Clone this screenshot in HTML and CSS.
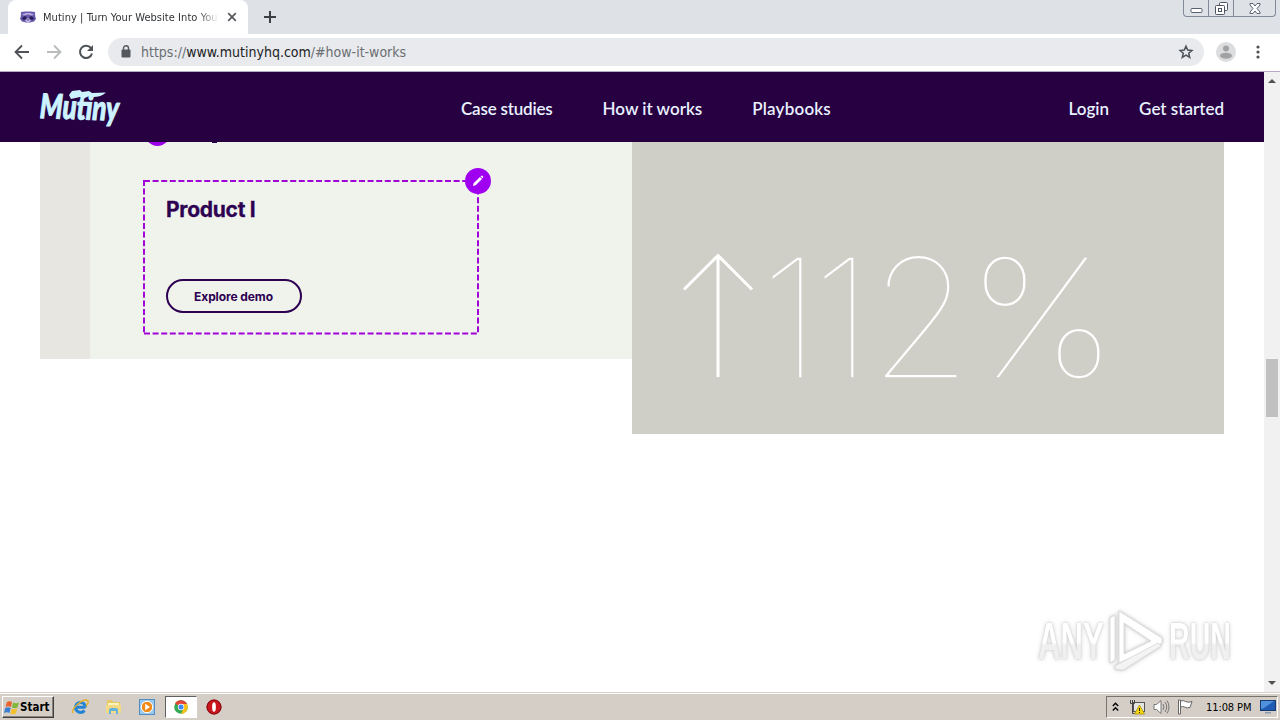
FILE: index.html
```html
<!DOCTYPE html>
<html lang="en">
<head>
    <meta charset="UTF-8">
    <meta name="viewport" content="width=device-width, initial-scale=1.0">
    <title>Mutiny | Turn Your Website Into Your #1 Channel</title>
    <link rel="stylesheet" href="styles.css">
</head>
<body>
    <!-- Browser tabs -->
    <div class="tabstrip">
        <div class="tab">
            <svg class="favicon" width="16" height="14" viewBox="0 0 16 14">
                <path d="M1 2l4-.5h6l4 .5 .2 4 .8 3-2 2.500-4 1H6l-4-1L0 9l.8-3z" fill="#6a5aae"/>
                <path d="M2 4.500l4-1.500h4l4 1.500-2 1-4-1-4 1z" fill="#b9addf"/>
                <path d="M2 8l2.500-2 2.500 1L5.500 9.500 3 10zM14 8l-2.500-2L9 7l1.500 2.500 2.500.5z" fill="#2c2059"/>
                <path d="M5 11L8 8l3 3-3 1.500z" fill="#c9bfea"/>
                <path d="M7 9.500h2L8 11z" fill="#22184e"/>
            </svg>
            <span class="tab-title">Mutiny | Turn Your Website Into You</span>
            <svg class="tab-close" width="10" height="10" viewBox="0 0 10 10"><path d="M1.200 1.200l7.600 7.600M8.800 1.200L1.200 8.800" stroke="#55595d" stroke-width="1.700"/></svg>
        </div>
        <svg class="new-tab" width="12" height="12" viewBox="0 0 12 12"><path d="M6 0v12M0 6h12" stroke="#3c4043" stroke-width="2"/></svg>
        <div class="window-buttons">
            <span class="win-btn"><svg width="13" height="14" viewBox="0 0 13 14"><rect x="1" y="7.500" width="11" height="4" rx="1" fill="#fff" stroke="#5b6270"/></svg></span>
            <span class="win-btn"><svg width="13" height="13" viewBox="0 0 13 13" fill="#fff" stroke="#4d5462"><rect x="4.500" y=".5" width="8" height="8" rx="1"/><rect x=".5" y="3.500" width="9" height="9" rx="1"/><rect x="3.500" y="6.500" width="3" height="3"/></svg></span>
            <span class="win-btn wide"><svg width="12" height="11" viewBox="0 0 12 11"><path d="M1 .5h3l2 2.500 2-2.500h3v1.500L8 5.500 11 9v1.500H8L6 8l-2 2.500H1V9l3-3.500L1 2z" fill="#fff" stroke="#5b6270"/></svg></span>
        </div>
    </div>

    <!-- Address bar -->
    <div class="toolbar">
        <svg width="16" height="16" viewBox="0 0 16 16" fill="none" stroke="#4f5357" stroke-width="1.800"><path d="M15 8H2M8 1.500L1.500 8 8 14.500"/></svg>
        <svg width="16" height="16" viewBox="0 0 16 16" fill="none" stroke="#b9bbbd" stroke-width="1.800"><path d="M1 8h13M8 1.500L14.500 8 8 14.500"/></svg>
        <svg width="16" height="16" viewBox="0 0 16 16"><path d="M13 4.200A6.100 6.100 0 1 0 14 9.500" fill="none" stroke="#4f5357" stroke-width="2"/><path d="M15 1v6H9z" fill="#4f5357"/></svg>
        <div class="omnibox">
            <svg width="10" height="13" viewBox="0 0 10 13"><rect y="4.500" x=".5" width="9" height="8" rx="1" fill="#55595d"/><path d="M2.500 5V3.200a2.500 2.500 0 0 1 5 0V5" fill="none" stroke="#55595d" stroke-width="1.400"/></svg>
            <span class="url">https://<b>www.mutinyhq.com</b>/#how-it-works</span>
            <svg class="star" width="16" height="16" viewBox="0 0 16 16"><path d="M8 2.200l1.700 3.900 4.200.4-3.200 2.800 1 4.100L8 11.200l-3.700 2.200 1-4.100-3.200-2.800 4.200-.4z" fill="none" stroke="#4f5357" stroke-width="1.500"/></svg>
        </div>
        <svg class="avatar" width="20" height="20" viewBox="0 0 20 20"><circle cx="10" cy="10" r="10" fill="#dcdddf"/><circle cx="10" cy="6.500" r="3" fill="#a0a2a4"/><ellipse cx="10" cy="13.700" rx="6" ry="3" fill="#a0a2a4"/></svg>
        <svg class="kebab" width="4" height="14" viewBox="0 0 4 14" fill="#4f5357"><circle cx="2" cy="2" r="1.600"/><circle cx="2" cy="7" r="1.600"/><circle cx="2" cy="12" r="1.600"/></svg>
    </div>

    <div class="viewport">
        <div class="page">
            <header>
                <div class="logo">
                    <span>Mutiny</span>
                    <svg class="logo-flag" width="38" height="10" viewBox="0 0 38 10"><path d="M0 5L3 1l8-1 2 2 7-1 3 2 14-.5Q32 7 24 7l-4-1-6 3-3-2-9 2z" fill="#cdf3ff"/></svg>
                </div>
                <nav>
                    <a class="tight">Case studies</a>
                    <a>How it works</a>
                    <a class="loose">Playbooks</a>
                </nav>
                <div class="account">
                    <a>Login</a>
                    <a>Get started</a>
                </div>
            </header>

            <main>
                <section class="demo">
                    <div class="demo-rail"></div>
                    <div class="demo-body">
                        <div class="brand-row">
                            <span class="brand-dot"></span>
                            <span class="brand-tail"></span>
                        </div>
                        <div class="editable">
                            <svg class="outline" width="336" height="155" viewBox="0 0 336 155" fill="none" stroke="#a002d8" stroke-width="2" stroke-dasharray="6 2.600"><path d="M1 1H335M1 153.500H335M1 0V154M335 0V154"/></svg>
                            <h2>Product I</h2>
                            <button>Explore demo</button>
                            <span class="edit-badge">
                                <svg width="12" height="12" viewBox="0 0 12 12" fill="#fff"><path d="M1 11l.6-2.700L8 2l2 2-6.300 6.300zM8.600 1.400l.8-.7q.4-.2.8.1l1 1q.3.400 0 .8l-.7.700z"/></svg>
                            </span>
                        </div>
                    </div>
                </section>
                <section class="stat">
                    <svg class="stat-arrow" width="72" height="125" viewBox="0 0 72 125" fill="none" stroke="#fff" stroke-width="3"><path d="M36 124V3M2 36.500L36 2.500l34 34"/></svg>
                    <div class="stat-value"><span class="ones">11</span><span class="two">2</span><span class="percent">%</span></div>
                </section>
            </main>

            <div class="watermark">
                <span class="any">ANY</span>
                <svg width="60" height="66" viewBox="0 0 60 66" fill="#fff" stroke="#dedede" stroke-width="1">
                    <path d="M4 9l5-3v45l-5 3z"/>
                    <path fill-rule="evenodd" d="M13 2l43 27v5L13 54zM18 14v31l27-13z"/>
                    <path d="M9 57l43-23 3 3-38 24-8-1z" fill="#f4f4f4"/>
                </svg>
                <span class="run">RUN</span>
            </div>
        </div>
        <div class="scrollbar">
            <span class="arrow up"></span>
            <span class="thumb"></span>
            <span class="arrow down"></span>
        </div>
    </div>

    <!-- Windows taskbar -->
    <div class="taskbar">
        <div class="start">
            <svg width="16" height="15" viewBox="0 0 16 15"><path d="M3 2q3-1.500 5 0L7 7Q4 5.500 1.500 7z" fill="#e8622c"/><path d="M9 2.500q3 1.500 6 0l-1.500 5q-3 1.300-5.500 0z" fill="#7fb83a"/><path d="M1.200 8q3-1.500 5.500 0l-1.300 5Q3 11.500 0 13z" fill="#3b7fd0"/><path d="M7.700 8.500q3 1.500 5.500 0l-1.300 5q-3 1.300-5.500 0z" fill="#f5c02e"/></svg>
            <span>Start</span>
        </div>
        <div class="launchers">
            <span class="launcher"><svg width="17" height="16" viewBox="0 0 17 16" fill="none"><path d="M13.500 8.300H5M13.500 8.300a5 5 0 1 0-1 3.200" stroke="#2384d6" stroke-width="3"/><path d="M1 14Q-1 11 6 5t10-3q1 2-2 5" stroke="#e6ae26" stroke-width="1.400"/></svg></span>
            <span class="launcher"><svg width="17" height="16" viewBox="0 0 17 16"><path d="M2 1h5l1 2h7v11H2z" fill="#e8c865"/><path d="M3 4h11v5H3z" fill="#fff3bc"/><path d="M1 6h15v8H1z" fill="#f4da82"/><path d="M4 15v-4q0-2 2-2h5q2 0 2 2v4h-2v-3H6v3z" fill="#65b3dc"/></svg></span>
            <span class="launcher"><svg width="16" height="16" viewBox="0 0 16 16"><rect x=".5" y=".5" width="15" height="15" fill="#9cc9ee" stroke="#4d8fc5"/><circle cx="8" cy="8" r="5.700" fill="#f48a16" stroke="#fff"/><path d="M6.200 4.800L11 8l-4.800 3.200z" fill="#fff"/></svg></span>
            <span class="launcher active"><svg width="14" height="14" viewBox="0 0 14 14"><circle cx="7" cy="7" r="6.800" fill="#37a853"/><path d="M7 7L1.100 3.600A6.800 6.800 0 0 1 13 4z" fill="#e34334"/><path d="M7 4h6a6.800 6.800 0 0 1-6 9.800l3-6z" fill="#fbc116"/><circle cx="7" cy="7" r="3.200" fill="#fff"/><circle cx="7" cy="7" r="2.500" fill="#4285f4"/></svg></span>
            <span class="launcher"><svg width="16" height="16" viewBox="0 0 16 16"><circle cx="8" cy="8" r="7.500" fill="#c9151b"/><circle cx="8" cy="8" r="7" fill="none" stroke="#7d0a10"/><ellipse cx="8" cy="8" rx="1.900" ry="4.800" fill="#fff"/></svg></span>
        </div>
        <div class="tray">
            <svg class="chevrons" width="7" height="10" viewBox="0 0 7 10" fill="none" stroke="#000" stroke-width="1.400"><path d="M.8 4L3.500 1.300 6.200 4M.8 8.500l2.700-2.700 2.700 2.700"/></svg>
            <svg class="network" width="16" height="16" viewBox="0 0 16 16"><rect x="4.500" y="3.500" width="11" height="9" fill="#e4e4e0" stroke="#555"/><path d="M1.500 1v3.500h4V1M3.500 1v13.500H8" fill="none" stroke="#444"/><path d="M10.500 6l5 9h-10z" fill="#f8d90f" stroke="#a38700" stroke-width=".7"/><path d="M10.500 9v3M10.500 13v1" stroke="#222"/></svg>
            <svg class="volume" width="17" height="16" viewBox="0 0 17 16" fill="none" stroke="#777"><path d="M1 5.500h2.500L8 1.500v13l-4.500-4H1z" fill="#fff"/><path d="M10 5q2 3 0 6M12 3q3.500 5 0 10M14 1.500q4 6.500 0 13"/></svg>
            <svg class="flag" width="16" height="16" viewBox="0 0 16 16" fill="#fff" stroke="#666"><path d="M1.500 1h2v14h-2z"/><path d="M3.500 2q3-1 5 .5 3 1.500 6.500 0l-2 6Q10 9.500 7.500 8q-2-1-4 0z"/></svg>
            <span class="clock">11:08 PM</span>
            <svg class="desktop" width="16" height="14" viewBox="0 0 16 14"><rect x=".5" y=".5" width="15" height="10" fill="#205cb4" stroke="#153b75"/><path d="M1 1h13L4 8 1 9z" fill="#4f91dc"/><path d="M5 12h6v1.500H5z" fill="#8c98ac"/></svg>
        </div>
    </div>
</body>
</html>
```
FILE: styles.css
```css
* {
    box-sizing: border-box;
}

body {
    display: flex;
    flex-direction: column;
    width: 1280px;
    height: 720px;
    margin: 0;
    overflow: hidden;
    background: #fff;
    font-family: "DejaVu Sans Condensed", "DejaVu Sans", sans-serif;
}

svg {
    display: block;
    flex: none;
}

/* Browser tabs */
.tabstrip {
    display: flex;
    height: 34px;
    background: #dee1e6;
    position: relative;
}

.tab {
    display: flex;
    align-items: center;
    width: 240px;
    margin-left: 8px;
    padding-left: 12px;
    background: #fff;
    border-radius: 8px 8px 0 0;
}

.tab-title {
    width: 176px;
    margin: 0 8px 0 7px;
    overflow: hidden;
    white-space: nowrap;
    font-size: 11px;
    letter-spacing: 0.05px;
    color: #303336;
    -webkit-mask-image: linear-gradient(90deg, #000 88%, transparent);
    mask-image: linear-gradient(90deg, #000 88%, transparent);
}

.new-tab {
    margin: 11px 0 0 16px;
}

.window-buttons {
    display: flex;
    height: 17px;
    margin: 0 4px 0 auto;
    border: 1px solid #82899a;
    border-top: 0;
    border-radius: 0 0 4px 4px;
}

.win-btn {
    display: flex;
    justify-content: center;
    align-items: center;
    width: 25px;
    border-right: 1px solid #82899a;
}

.win-btn.wide {
    width: 41px;
    border-right: 0;
}

/* Address bar */
.toolbar {
    display: flex;
    align-items: center;
    gap: 16px;
    height: 38px;
    padding: 0 20px 2px 14px;
    border-bottom: 1px solid #b9a9c8;
}

.omnibox {
    display: flex;
    align-items: center;
    width: 1096px;
    height: 28px;
    margin-left: -2px;
    padding: 0 10px 0 13px;
    border-radius: 14px;
    background: #e8eaed;
}

.url {
    margin-left: 10px;
    font-size: 14px;
    color: #6b6f73;
}

.url b {
    font-weight: normal;
    color: #202124;
}

.star {
    margin-left: auto;
}

.avatar {
    margin-left: -4px;
}

.kebab {
    margin-left: 4px;
}

/* Page */
.viewport {
    display: flex;
    height: 620px;
}

.page {
    position: relative;
    width: 1264px;
    overflow: hidden;
}

header {
    display: flex;
    align-items: center;
    position: relative;
    height: 70px;
    padding: 2px 40px 0;
    background: #260041;
    color: #e9f1ff;
    font-family: Lato, sans-serif;
    font-size: 17px;
    font-weight: 600;
}

.logo {
    position: relative;
    width: 80px;
    height: 40px;
    color: #cdf3ff;
    font-size: 34px;
    font-weight: 900;
    font-style: italic;
    line-height: 34px;
    -webkit-text-stroke: 1px #cdf3ff;
}

.logo span {
    display: block;
    transform: rotate(2deg) scaleX(.76);
    transform-origin: 0 50%;
}

.logo-flag {
    position: absolute;
    left: 29px;
    top: 2px;
}

nav {
    display: flex;
    gap: 50px;
    margin-left: 341px;
}

.tight {
    letter-spacing: -0.2px;
}

.loose {
    letter-spacing: 0.2px;
}

.account {
    display: flex;
    gap: 30px;
    margin-left: auto;
}

main {
    display: flex;
    align-items: flex-start;
    padding: 0 40px;
}

.demo {
    display: flex;
    width: 592px;
    height: 217px;
    background: #f0f3ec;
}

.demo-rail {
    width: 50px;
    background: #e8e6e1;
}

.demo-body {
    padding-left: 53px;
}

.brand-row {
    display: flex;
    height: 38px;
    padding-left: 2px;
}

.brand-dot {
    width: 25px;
    height: 25px;
    margin-top: -21px;
    border-radius: 50%;
    background: #9b00e8;
}

.brand-tail {
    width: 5px;
    height: 1px;
    margin-left: 42px;
    background: #2d0052;
}

.editable {
    position: relative;
    width: 336px;
    height: 155px;
    padding: 17px 23px;
    color: #2d0052;
    font-family: Inter, sans-serif;
}

.outline {
    position: absolute;
    left: 0;
    top: 0;
}

h2 {
    height: 82px;
    margin: 0;
    font-size: 21px;
    line-height: 26px;
    letter-spacing: -0.25px;
    -webkit-text-stroke: 0.3px #2d0052;
}

button {
    width: 136px;
    height: 34px;
    margin-left: -0.5px;
    padding: 0;
    border: 2px solid #2d0052;
    border-radius: 17px;
    background: none;
    color: #2d0052;
    font-family: Inter, sans-serif;
    font-size: 12px;
    font-weight: 700;
    letter-spacing: -0.1px;
}

.edit-badge {
    display: flex;
    justify-content: center;
    align-items: center;
    position: absolute;
    right: -12px;
    top: -12px;
    width: 26px;
    height: 26px;
    border-radius: 50%;
    background: #a000f0;
}

.stat {
    display: flex;
    width: 592px;
    height: 292px;
    padding: 111px 0 0 50px;
    background: #d0cfc7;
}

/* the outline in the panel's colour thins the strokes down to a hairline */
.stat-value {
    display: flex;
    height: 125px;
    margin-left: 6px;
    color: #fff;
    font-family: Inter, sans-serif;
    font-size: 166px;
    font-weight: 100;
    line-height: 130px;
    -webkit-text-stroke: 1.5px #d0cfc7;
}

.ones {
    width: 109px;
    letter-spacing: -9px;
}

.percent {
    margin-left: -6px;
    transform: scaleX(1.08);
    transform-origin: 0 50%;
}

/* Watermark */
.watermark {
    display: flex;
    position: absolute;
    left: 1038px;
    top: 537px;
    font-family: "Liberation Sans", sans-serif;
    font-size: 51px;
    font-weight: bold;
    line-height: 66px;
    filter: drop-shadow(0 0 1px #ccc) drop-shadow(0 0 2px #ddd);
}

.watermark .any,
.watermark .run {
    width: 114px;
    background: linear-gradient(#fff 50%, #f0f0f0 55%);
    -webkit-background-clip: text;
    background-clip: text;
    color: transparent;
    transform: scaleX(.56);
    transform-origin: 0 50%;
}

.watermark .any {
    margin-right: -46px;
    transform: scaleX(.61);
}

.watermark .run {
    margin-left: 3px;
}

/* Scrollbar */
.scrollbar {
    display: flex;
    flex-direction: column;
    align-items: center;
    width: 16px;
    padding: 7px 0;
    background: #f1f1f1;
}

.arrow {
    border: 4px solid transparent;
}

.arrow.up {
    border-top: 0;
    border-bottom-color: #505050;
}

.arrow.down {
    margin-top: auto;
    border-bottom: 0;
    border-top-color: #505050;
}

.thumb {
    width: 12px;
    height: 58px;
    margin-top: 276px;
    background: #c1c1c1;
}

/* Taskbar */
.taskbar {
    display: flex;
    height: 28px;
    padding: 3px 2px 1px;
    border-top: 1px solid #d4d0c8;
    box-shadow: inset 0 1px #fff;
    background: #d4cec6;
}

.start {
    display: flex;
    align-items: center;
    width: 52px;
    height: 22px;
    padding-left: 1px;
    border: 1px solid;
    border-color: #fff #404040 #404040 #fff;
    box-shadow: inset -1px -1px #87837d;
    font-size: 11.5px;
    font-weight: bold;
}

.launchers {
    display: flex;
    margin-left: 10px;
}

.launcher {
    display: flex;
    justify-content: center;
    align-items: center;
    width: 32px;
    height: 22px;
    margin-right: 1.5px;
}

.launcher.active {
    border: 1px solid;
    border-color: #606060 #fff #fff #606060;
    background: #fff;
}

.tray {
    display: flex;
    align-items: center;
    width: 172px;
    height: 22px;
    margin-left: auto;
    padding-left: 5px;
    border: 1px solid;
    border-color: #77736d #fff #fff #77736d;
}

.network {
    margin-left: 10px;
}

.volume {
    margin-left: 8px;
}

.flag {
    margin-left: 7px;
}

.clock {
    width: 46px;
    margin-left: 13px;
    white-space: nowrap;
    font-size: 11px;
    letter-spacing: -0.1px;
}

.desktop {
    margin-left: 8px;
}
```
